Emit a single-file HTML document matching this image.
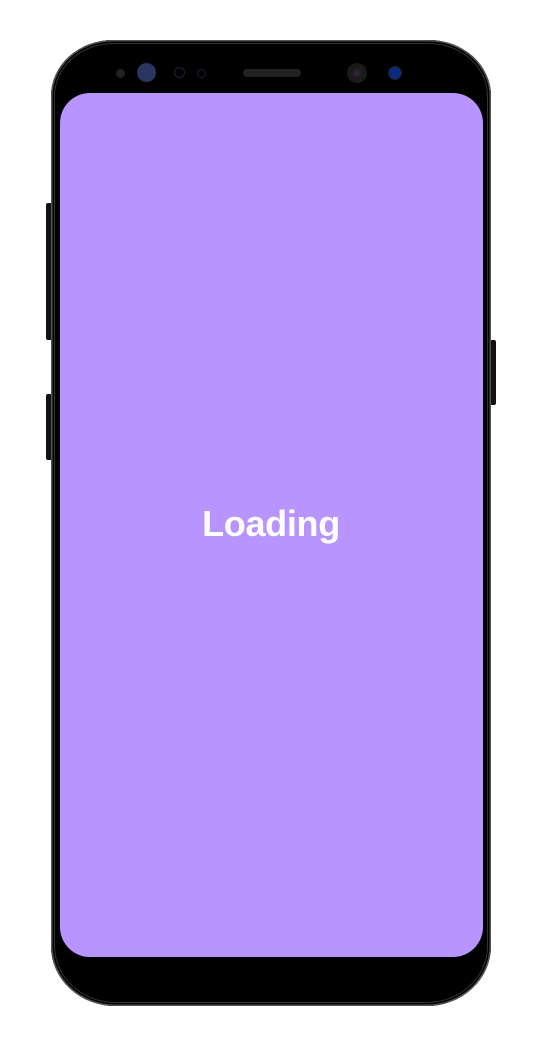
<!DOCTYPE html>
<html><head><style>
html,body{margin:0;padding:0;background:#fff;width:542px;height:1051px;overflow:hidden;position:relative;font-family:"Liberation Sans",sans-serif}
.btn{position:absolute;background:#111;border-radius:2px}
.phone{position:absolute;left:51px;top:40px;width:440px;height:966px;background:#000;border-radius:62px 62px 64px 64px/56px 56px 60px 60px;box-shadow:inset 0 0 0 1.5px #555,inset 0 0 0 3px #000,inset 0 0 0 4px #333}
.screen{position:absolute;left:60px;top:93px;width:423px;height:864px;background:#b794fe;border-radius:30px}
.t{position:absolute;left:0;width:542px;top:503px;text-align:center;color:#fff;font-weight:bold;font-size:36px;letter-spacing:-0.3px}
.c{position:absolute;border-radius:50%}
</style></head><body>
<div class="btn" style="left:46px;top:203px;width:6px;height:137px"></div>
<div class="btn" style="left:46px;top:394px;width:6px;height:66px"></div>
<div class="btn" style="left:490px;top:340px;width:6px;height:65px"></div>
<div class="phone"></div>
<div class="c" style="left:116px;top:69px;width:9px;height:9px;background:#222"></div>
<div class="c" style="left:137px;top:63px;width:19px;height:19px;background:#2a3560"></div>
<div class="c" style="left:174px;top:67px;width:11px;height:11px;border:1.5px solid #1e2040;box-sizing:border-box"></div>
<div class="c" style="left:197px;top:69px;width:9px;height:9px;border:1.5px solid #1e2040;box-sizing:border-box"></div>
<div style="position:absolute;left:243px;top:69px;width:58px;height:8px;border-radius:4px;background:#222"></div>
<div class="c" style="left:347px;top:63px;width:20px;height:20px;background:#1a1a1a"></div>
<div class="c" style="left:353px;top:69px;width:8px;height:8px;background:#2d2030"></div>
<div class="c" style="left:389px;top:67px;width:12px;height:12px;background:#0a2a80;box-shadow:0 0 0 1px #222"></div>
<div class="screen"></div>
<div class="t">Loading</div>
</body></html>
